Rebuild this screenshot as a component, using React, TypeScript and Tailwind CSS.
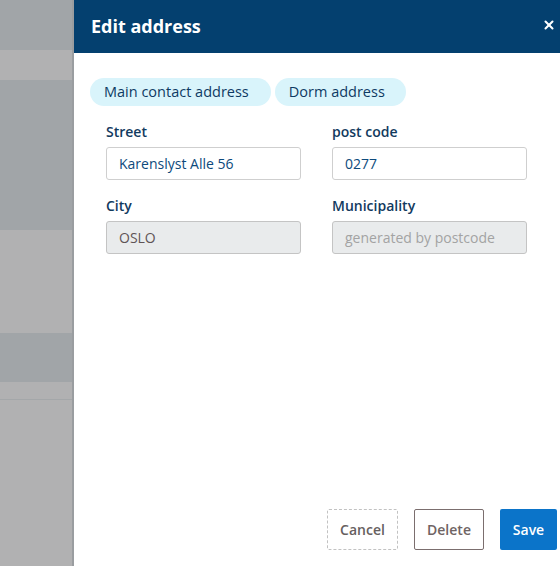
import { X } from "lucide-react";

const font = { fontFamily: '"Open Sans", "Noto Sans", sans-serif' };

function Field({
  label,
  value,
  disabled,
  placeholder,
}: {
  label: string;
  value?: string;
  disabled?: boolean;
  placeholder?: string;
}) {
  return (
    <div className="flex flex-col">
      <label className="text-[14px] font-semibold text-[#123a5e] leading-5 mb-[5px]">{label}</label>
      <div
        className={`h-[33px] rounded-[3px] border flex items-center px-[12px] text-[14px] ${
          disabled ? "bg-[#e9ebec] border-[#c4c4c4]" : "bg-white border-[#cfcfcf]"
        }`}
      >
        {value ? (
          <span className={disabled ? "text-[#5f5455]" : "text-[#0d4a7c]"}>{value}</span>
        ) : (
          <span className="text-[#a3a3a3]">{placeholder}</span>
        )}
      </div>
    </div>
  );
}

export default function App() {
  return (
    <div className="w-[560px] h-[566px] flex overflow-hidden bg-white" style={font}>
      {/* dimmed page behind the drawer */}
      <div className="w-[74px] shrink-0 flex flex-col border-r-2 border-[#9a9da0]">
        <div className="h-[50px] bg-[#a1a5a8]" />
        <div className="h-[30px] bg-[#b1b1b2]" />
        <div className="h-[150px] bg-[#a1a5a8]" />
        <div className="h-[103px] bg-[#b1b1b2]" />
        <div className="h-[49px] bg-[#a1a5a8]" />
        <div className="h-[18px] bg-[#b1b1b2] border-b border-[#a4a7a9]" />
        <div className="flex-1 bg-[#b1b1b2]" />
      </div>

      {/* drawer */}
      <div className="flex-1 flex flex-col bg-white">
        <div className="h-[53px] bg-[#04406f] flex items-center justify-between pl-[17px] pr-[4px]">
          <h2 className="text-[18px] font-bold text-white">Edit address</h2>
          <X size={14} strokeWidth={3.5} className="text-white -mt-[3px]" />
        </div>

        <div className="flex-1 flex flex-col pl-[16px] pr-[3px] pt-[25px] pb-[16px]">
          <div className="flex gap-[4px]">
            <span className="h-[28px] pl-[14px] pr-[22px] rounded-full bg-[#d9f4fb] text-[14.5px] text-[#0e3a63] flex items-center">
              Main contact address
            </span>
            <span className="h-[28px] pl-[14px] pr-[21px] rounded-full bg-[#d9f4fb] text-[14.5px] text-[#0e3a63] flex items-center">
              Dorm address
            </span>
          </div>

          <div className="grid grid-cols-[195px_195px] gap-x-[31px] gap-y-[16px] pl-[16px] mt-[16px]">
            <Field label="Street" value="Karenslyst Alle 56" />
            <Field label="post code" value="0277" />
            <Field label="City" value="OSLO" disabled />
            <Field label="Municipality" placeholder="generated by postcode" disabled />
          </div>

          <div className="mt-auto flex justify-end gap-[16px]">
            <button className="h-[41px] w-[71px] rounded-[2px] border border-dashed border-[#c2c2c2] text-[14px] font-semibold text-[#666060]">
              Cancel
            </button>
            <button className="h-[41px] w-[70px] rounded-[2px] border border-[#7b6e6e] text-[14px] font-semibold text-[#6f6464]">
              Delete
            </button>
            <button className="h-[41px] w-[57px] rounded-[2px] bg-[#0b74c9] text-[14px] font-semibold text-white">
              Save
            </button>
          </div>
        </div>
      </div>
    </div>
  );
}
